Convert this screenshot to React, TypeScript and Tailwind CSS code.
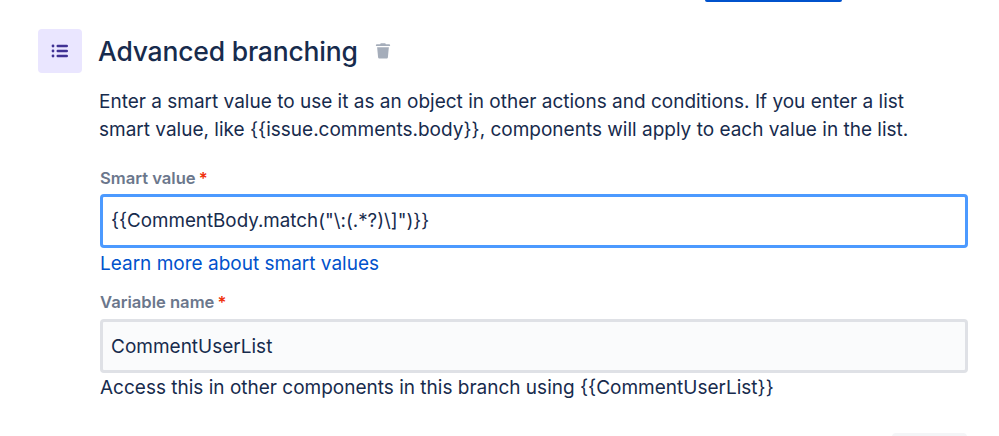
export default function App() {
  return (
    <div className="w-[999px] h-[436px] overflow-hidden bg-white text-[#172b4d] font-['Inter','Liberation_Sans',sans-serif]">
      <div className="flex justify-end pr-[157px]">
        <div className="w-[137px] h-[2px] bg-[#0052cc] rounded-b-sm" />
      </div>
      <div className="flex pl-[38px] pr-[31px] pt-[27px] gap-[17px]">
        <div className="w-[44px] h-[44px] shrink-0 rounded-[4px] bg-[#eae6ff] flex items-center justify-center">
          <svg width="18" height="16" viewBox="0 0 18 16" fill="#403294">
            <circle cx="2" cy="3" r="1.4" />
            <circle cx="2" cy="8" r="1.4" />
            <circle cx="2" cy="13" r="1.4" />
            <rect x="5.5" y="1.8" width="11.5" height="2.4" rx="1.2" />
            <rect x="5.5" y="6.8" width="11.5" height="2.4" rx="1.2" />
            <rect x="5.5" y="11.8" width="11.5" height="2.4" rx="1.2" />
          </svg>
        </div>
        <div className="flex-1 min-w-0">
          <div className="flex items-center gap-[16px] h-[44px]">
            <h1 className="text-[26.5px] font-medium leading-[44px] tracking-[-0.2px] -ml-[1px]">Advanced branching</h1>
            <svg width="18" height="17" viewBox="0 0 18 18" fill="#a5adba" className="-mt-[1px]">
              <path d="M6.6 1.2h4.8l.6 1.3h3.6c.5 0 .9.4.9.9v.9H1.5v-.9c0-.5.4-.9.9-.9H6z" />
              <path d="M2.8 5.6h12.4l-1 10.5c-.1.8-.7 1.4-1.5 1.4H5.3c-.8 0-1.4-.6-1.5-1.4z" />
            </svg>
          </div>
          <p className="mt-[15px] text-[19px] leading-[28px] w-[840px]">
            Enter a smart value to use it as an object in other actions and conditions. If you enter a list smart value, like {"{{issue.comments.body}}"}, components will apply to each value in the list.
          </p>
          <div className="ml-[1px] mt-[24px]">
            <label className="flex h-[20px] items-center text-[16.6px] font-semibold text-[#6b778c]">
              Smart value<span className="ml-[3px] text-[#f0300a]">*</span>
            </label>
            <div className="mt-[6px] h-[54px] rounded-[4px] border-[3px] border-[#4c9aff] bg-white flex items-center pl-[8px] pt-[1px] text-[18.8px]">
              {'{{CommentBody.match("\\:(.*?)\\]")}}'}
            </div>
            <a className="block mt-[3px] text-[19px] leading-[26px] text-[#0052cc]">Learn more about smart values</a>
            <label className="mt-[15px] flex h-[20px] items-center text-[16.6px] font-semibold text-[#6b778c]">
              Variable name<span className="ml-[3px] text-[#f0300a]">*</span>
            </label>
            <div className="mt-[7px] h-[54px] rounded-[4px] border-[3px] border-[#dfe1e6] bg-[#fafbfc] flex items-center pl-[8px] pt-[2px] text-[19px]">
              CommentUserList
            </div>
            <p className="mt-[2px] text-[19px] leading-[26px]">
              Access this in other components in this branch using {"{{CommentUserList}}"}
            </p>
          </div>
          <div className="flex justify-end pr-[1px] mt-[32px]">
            <div className="w-[75px] h-[8px] rounded-t-[4px] bg-[#f4f5f7]" />
          </div>
        </div>
      </div>
    </div>
  );
}
